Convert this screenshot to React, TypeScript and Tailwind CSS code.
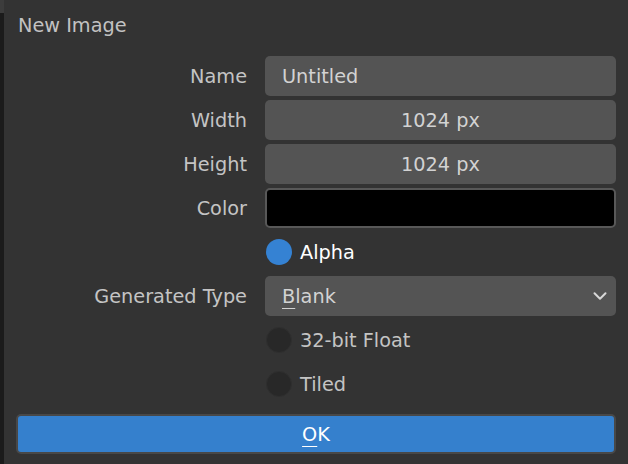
import { ChevronDown } from 'lucide-react';

const font = { fontFamily: '"DejaVu Sans", sans-serif' };

function Label({ text }: { text: string }) {
    return <div className="w-[231px] shrink-0 pt-[2px] text-right text-[#c4c4c4]">{text}</div>;
}

function Row({ label, children }: { label?: string; children: React.ReactNode }) {
    return (
        <div className="flex h-10 items-center gap-[18px]">
            <Label text={label ?? ''} />
            <div className="flex h-full flex-1 items-center">{children}</div>
        </div>
    );
}

function Field({ value, center }: { value: string; center?: boolean }) {
    return (
        <div
            className={
                center
                    ? 'flex h-full w-full items-center justify-center rounded-[5px] bg-[#545454] pt-[2px] text-[#d2d2d2]'
                    : 'flex h-full w-full items-center rounded-[5px] bg-[#545454] pl-[17px] pt-[2px] text-[#d2d2d2]'
            }
        >
            {value}
        </div>
    );
}

function Check({ label, on }: { label: string; on?: boolean }) {
    return (
        <div className="flex items-center gap-[8px] pl-px">
            <span
                className={
                    on
                        ? 'h-[26px] w-[26px] rounded-full bg-[#3582d3]'
                        : 'h-[26px] w-[26px] rounded-full border border-[#2f2f2f] bg-[#282828]'
                }
            />
            <span className={on ? 'pt-[2px] text-white' : 'pt-[2px] text-[#c4c4c4]'}>{label}</span>
        </div>
    );
}

export default function App() {
    return (
        <div className="flex h-[464px] w-[628px] bg-[#333333] text-[19.3px] leading-6" style={font}>
            <div className="flex w-1 flex-col bg-[#1b1b1b]">
                <div className="h-[13px] bg-[#3c3c3c]" />
            </div>

            <div className="flex flex-1 flex-col pl-3 pr-3">
                <div className="h-[56px] pl-[2px] pt-[14px] text-[#c2c2c2]">New Image</div>

                <div className="flex flex-col gap-1">
                    <Row label="Name">
                        <Field value="Untitled" />
                    </Row>
                    <Row label="Width">
                        <Field value="1024 px" center />
                    </Row>
                    <Row label="Height">
                        <Field value="1024 px" center />
                    </Row>
                    <Row label="Color">
                        <div className="h-full w-full rounded-[5px] border-2 border-[#585858] bg-black" />
                    </Row>
                    <Row>
                        <Check label="Alpha" on />
                    </Row>
                    <Row label="Generated Type">
                        <div className="flex h-full w-full items-center justify-between rounded-[5px] bg-[#545454] pl-[17px] pr-[5px] text-[#d2d2d2]">
                            <span className="pt-[2px]">
                                <span className="underline decoration-1 underline-offset-[5px]">B</span>lank
                            </span>
                            <ChevronDown className="h-[22px] w-[22px] text-[#d8d8d8]" strokeWidth={2.2} />
                        </div>
                    </Row>
                    <Row>
                        <Check label="32-bit Float" />
                    </Row>
                    <Row>
                        <Check label="Tiled" />
                    </Row>
                </div>

                <button className="mt-[10px] flex h-10 w-full items-center justify-center rounded-[5px] border-2 border-[#484848] bg-[#3580cd] pt-[2px] text-white">
                    <span>
                        <span className="underline decoration-1 underline-offset-[5px]">O</span>K
                    </span>
                </button>
            </div>
        </div>
    );
}
